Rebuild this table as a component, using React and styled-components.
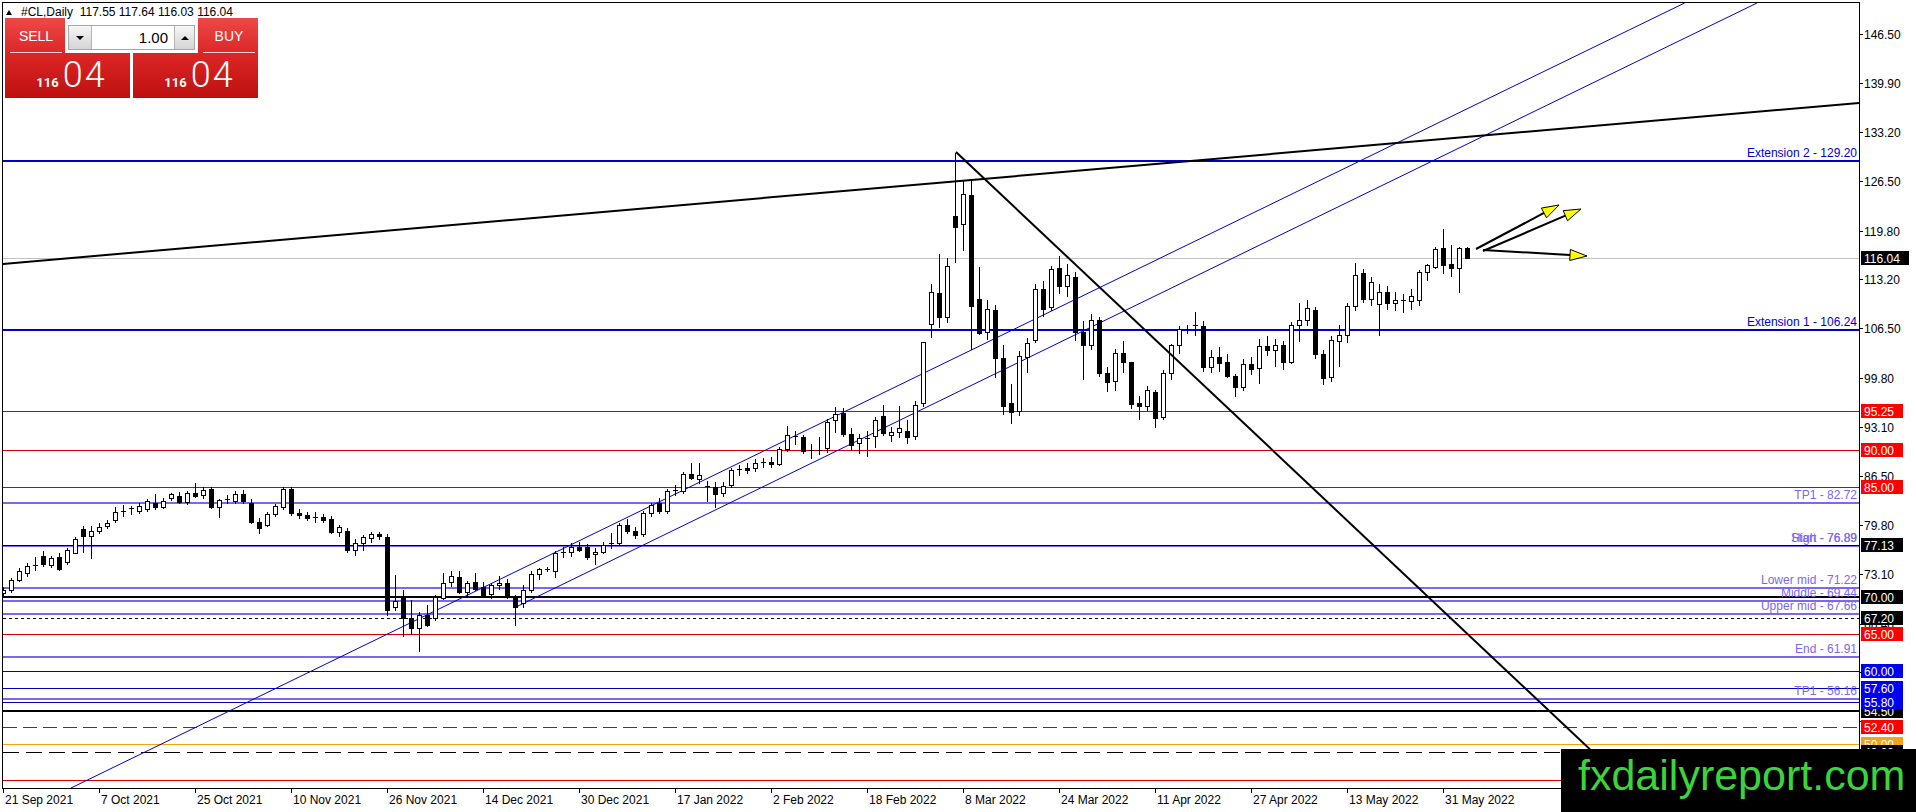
import React from 'react';
import styled, { createGlobalStyle } from 'styled-components';

const GlobalStyle = createGlobalStyle`
  html, body {
    margin: 0;
    padding: 0;
    background: #fff;
  }
  body {
    font-family: "Liberation Sans", Arial, sans-serif;
    overflow: hidden;
  }
`;

const BLUE = '#0000cd';
const NAVY = '#0000b4';
const PURPLE = '#7b68ee';
const RED_LINE = '#d40000';
const RED_TAG = '#ff0000';
const ORANGE = '#f4a21c';

const PLOT_R = 1859;
const PLOT_B = 788;

// chart scale: 146.50 sits at y=34, 7.36px per dollar
const priceY = (p) => 34 + (146.5 - p) * 7.36;
const barX = (i) => 3 + 8 * i;

// daily bars, 21 Sep 2021 .. 3 Jun 2022  [open, high, low, close]
const bars = [
  [70.6, 71.4, 70.2, 71.0], [70.9, 72.6, 70.5, 72.3], [72.3, 73.9, 72.0, 73.6], [73.2, 74.6, 72.7, 74.2],
  [74.3, 75.4, 73.6, 74.4], [75.6, 76.2, 74.1, 74.5], [74.4, 75.6, 73.9, 75.3], [75.5, 76.0, 73.5, 73.8],
  [74.8, 76.6, 74.4, 76.4], [76.0, 78.2, 75.8, 77.9], [79.2, 79.6, 76.0, 78.3], [78.3, 79.6, 75.2, 79.0],
  [79.0, 80.0, 78.5, 79.5], [79.6, 80.4, 79.2, 80.1], [80.4, 82.2, 80.0, 81.5], [81.6, 82.5, 80.9, 81.7],
  [81.9, 82.4, 81.2, 82.05], [81.7, 82.8, 81.3, 82.4], [81.9, 83.3, 81.6, 83.0], [82.8, 84.0, 81.8, 82.2],
  [82.2, 83.5, 81.9, 83.1], [83.4, 84.2, 83.0, 84.0], [83.7, 84.3, 82.6, 82.9], [82.9, 84.4, 82.5, 84.1],
  [84.1, 85.5, 83.5, 83.7], [83.8, 84.9, 83.3, 84.5], [84.7, 85.0, 81.9, 82.2], [82.2, 83.3, 80.7, 83.2],
  [83.3, 83.8, 82.6, 83.35], [83.0, 84.4, 82.6, 84.0], [84.0, 84.6, 82.7, 83.0], [82.8, 83.3, 79.9, 80.2],
  [80.2, 80.8, 78.6, 79.4], [79.8, 81.6, 79.5, 81.3], [81.3, 82.6, 80.9, 82.4], [82.2, 85.0, 81.8, 84.7],
  [84.7, 85.0, 81.0, 81.4], [81.4, 81.9, 80.6, 81.1], [81.1, 81.6, 80.3, 80.7], [80.9, 81.6, 80.1, 80.85],
  [80.9, 81.3, 80.1, 80.4], [80.6, 81.0, 78.5, 78.9], [78.9, 79.8, 78.2, 79.5], [79.0, 79.4, 76.0, 76.4],
  [76.4, 77.9, 75.6, 77.4], [77.3, 78.4, 76.3, 78.2], [78.0, 78.9, 77.4, 78.6], [78.5, 78.9, 77.8, 78.3],
  [78.2, 78.6, 67.4, 68.3], [68.6, 73.0, 68.1, 69.4], [70.0, 71.0, 64.6, 67.1], [67.1, 69.6, 64.9, 65.8],
  [65.8, 68.0, 62.5, 67.5], [67.5, 68.9, 65.9, 66.2], [67.1, 70.3, 66.8, 70.0], [69.9, 73.2, 69.6, 71.9],
  [72.0, 73.5, 71.4, 72.9], [72.7, 73.6, 70.4, 70.7], [70.7, 72.2, 70.2, 71.9], [72.0, 73.3, 70.8, 71.1],
  [71.3, 72.0, 69.9, 70.3], [70.4, 71.9, 69.7, 71.6], [71.6, 72.9, 71.0, 71.9], [71.9, 72.4, 69.7, 70.0],
  [69.9, 70.3, 66.1, 68.6], [69.2, 71.7, 68.5, 71.0], [71.0, 73.5, 70.6, 73.1], [73.1, 74.0, 72.3, 73.8],
  [73.8, 74.1, 73.4, 73.85], [73.6, 76.2, 72.6, 76.0], [76.0, 76.8, 75.3, 76.1], [76.1, 77.4, 75.4, 76.8],
  [76.8, 77.5, 76.1, 76.4], [76.8, 77.2, 75.0, 75.4], [75.8, 76.6, 74.4, 76.1], [76.1, 77.5, 75.8, 77.1],
  [77.3, 78.7, 76.5, 77.4], [77.4, 80.0, 76.9, 79.8], [79.8, 80.6, 78.6, 79.0], [79.0, 79.5, 77.9, 78.4],
  [78.5, 81.7, 78.1, 81.4], [81.4, 82.8, 80.9, 82.5], [82.8, 83.4, 81.3, 81.7], [81.7, 84.7, 81.3, 84.4],
  [84.4, 85.2, 83.7, 84.5], [84.4, 87.0, 84.0, 86.7], [86.7, 88.2, 85.9, 86.2], [86.0, 88.2, 85.4, 86.6],
  [85.0, 85.7, 82.9, 85.1], [85.0, 85.6, 82.1, 84.0], [84.1, 85.6, 83.6, 85.1], [85.2, 87.6, 84.8, 87.2],
  [87.3, 88.0, 86.5, 87.4], [87.5, 88.2, 86.7, 87.3], [87.5, 88.8, 87.0, 88.2], [88.2, 88.9, 87.6, 88.3],
  [88.4, 89.0, 87.5, 88.1], [88.1, 90.4, 87.8, 90.1], [90.1, 93.2, 89.7, 92.0], [91.9, 92.6, 90.6, 91.8],
  [91.7, 92.0, 89.4, 89.8], [89.9, 90.8, 88.7, 90.0], [89.8, 91.7, 89.3, 89.95], [90.2, 94.2, 89.6, 93.8],
  [94.0, 95.8, 92.3, 94.9], [95.0, 95.7, 91.8, 92.1], [92.2, 93.0, 89.9, 90.6], [90.9, 92.2, 89.5, 91.6],
  [91.6, 92.5, 89.0, 91.65], [91.9, 94.4, 90.3, 94.0], [94.6, 96.1, 91.9, 92.3], [92.0, 93.1, 91.0, 92.4],
  [92.4, 96.0, 91.6, 92.9], [92.6, 94.0, 90.8, 91.7], [91.9, 96.6, 91.4, 96.1], [96.4, 104.7, 95.8, 104.6],
  [107.1, 112.5, 105.2, 111.4], [111.3, 116.6, 106.6, 108.0], [108.0, 116.1, 107.2, 115.0], [121.8, 130.3, 115.4, 120.3],
  [120.7, 126.7, 117.0, 124.8], [124.6, 126.7, 103.5, 109.5], [110.5, 114.8, 105.6, 105.9], [106.0, 110.4, 104.9, 109.1],
  [109.0, 109.7, 99.8, 102.5], [102.5, 104.3, 94.8, 96.0], [96.4, 99.0, 93.5, 95.2], [95.3, 103.4, 94.6, 102.7],
  [102.6, 105.2, 100.4, 104.5], [104.9, 112.6, 104.5, 111.8], [111.9, 112.9, 108.0, 109.2], [109.4, 115.0, 108.8, 114.6],
  [114.7, 116.3, 111.2, 112.2], [112.3, 115.2, 110.8, 113.8], [113.5, 114.2, 104.8, 106.0], [106.0, 107.5, 99.5, 104.2],
  [104.3, 108.5, 103.5, 107.7], [107.7, 108.0, 99.9, 100.4], [100.5, 101.3, 97.9, 99.2], [99.3, 103.7, 98.0, 103.2],
  [103.2, 104.8, 100.5, 101.9], [101.9, 102.0, 95.6, 96.2], [96.3, 97.3, 94.0, 96.0], [96.0, 98.7, 95.3, 98.1],
  [97.9, 98.1, 93.0, 94.3], [94.4, 100.9, 94.0, 100.5], [100.5, 104.4, 99.5, 104.2], [104.2, 106.8, 103.0, 106.4],
  [106.4, 106.9, 105.8, 106.3], [107.0, 108.7, 105.4, 106.8], [106.8, 107.5, 100.6, 101.3], [101.3, 103.6, 100.5, 102.6],
  [102.6, 104.0, 100.6, 101.8], [101.9, 103.0, 99.7, 100.0], [100.0, 100.3, 97.2, 98.6], [98.6, 102.4, 98.0, 101.6],
  [101.6, 102.6, 100.2, 101.0], [101.1, 105.0, 99.0, 104.1], [104.1, 105.4, 102.8, 103.6], [103.5, 105.0, 101.3, 104.3],
  [104.3, 104.8, 100.9, 101.9], [102.0, 107.4, 101.6, 106.9], [106.9, 110.0, 104.7, 107.7], [107.7, 110.4, 106.8, 109.3],
  [109.0, 109.4, 102.4, 103.0], [103.0, 103.6, 98.8, 99.8], [99.9, 105.5, 99.2, 104.9], [104.8, 107.0, 101.3, 105.6],
  [105.6, 110.0, 104.5, 109.6], [109.6, 115.4, 108.8, 113.8], [114.0, 114.6, 110.0, 110.5], [110.5, 113.5, 109.5, 112.8],
  [109.8, 112.5, 105.5, 111.4], [111.4, 112.3, 109.0, 110.0], [110.0, 111.5, 108.8, 110.3], [110.3, 111.2, 108.6, 110.4],
  [110.2, 111.8, 109.0, 110.9], [110.4, 114.5, 109.6, 114.2], [114.2, 115.3, 112.9, 115.1], [114.8, 117.5, 114.6, 117.3],
  [117.4, 120.0, 113.9, 115.1], [115.3, 117.8, 113.5, 114.7], [114.7, 117.6, 111.3, 117.4], [117.4, 117.6, 115.9, 116.04],
];

const levels = [
  { p: 129.2, color: BLUE, w: 2 },
  { p: 106.24, color: BLUE, w: 2 },
  { p: 95.25, color: RED_LINE, w: 1 },
  { p: 90, color: RED_LINE, w: 1 },
  { p: 85, color: RED_LINE, w: 1 },
  { p: 82.72, color: PURPLE, w: 2 },
  { p: 76.89, color: PURPLE, w: 2 },
  { p: 77.13, color: '#000', w: 1 },
  { p: 71.22, color: PURPLE, w: 2 },
  { p: 69.44, color: PURPLE, w: 2 },
  { p: 70, color: '#000', w: 2 },
  { p: 67.66, color: PURPLE, w: 2 },
  { p: 67.2, color: '#000', w: 1, dash: '3 3' },
  { p: 65, color: RED_LINE, w: 1 },
  { p: 61.91, color: PURPLE, w: 2 },
  { p: 60, color: NAVY, w: 1 },
  { p: 57.6, color: NAVY, w: 1 },
  { p: 56.16, color: PURPLE, w: 2 },
  { p: 55.8, color: NAVY, w: 1 },
  { p: 54.5, color: '#000', w: 2 },
  { p: 52.4, color: RED_LINE, w: 1, dash: '14 6' },
  { p: 50, color: ORANGE, w: 1 },
  { p: 49, color: '#000', w: 1, dash: '16 7' },
  { p: 45.2, color: RED_LINE, w: 1 },
];

const levelNames = [
  { p: 129.2, text: 'Extension 2 - 129.20', color: BLUE },
  { p: 106.24, text: 'Extension 1 - 106.24', color: BLUE },
  { p: 82.72, text: 'TP1 - 82.72', color: PURPLE },
  { p: 76.89, text: 'Start - 76.89', color: PURPLE },
  { p: 76.89, text: 'High - 76.89', color: PURPLE },
  { p: 71.22, text: 'Lower mid - 71.22', color: PURPLE },
  { p: 69.44, text: 'Middle - 69.44', color: PURPLE },
  { p: 67.66, text: 'Upper mid - 67.66', color: PURPLE },
  { p: 61.91, text: 'End - 61.91', color: PURPLE },
  { p: 56.16, text: 'TP1 - 56.16', color: PURPLE },
];

// grid prices; the lowest ones sit under the level tags and the logo, so they only get a tick mark
const priceTicks = [146.5, 139.9, 133.2, 126.5, 119.8, 113.2, 106.5, 99.8, 93.1, 86.5, 79.8, 73.1, 66.4];
const hiddenTicks = [59.8, 53.1, 46.4];

const tags = [
  { p: 116.04, bg: '#000', wide: true },
  { p: 95.25, bg: RED_TAG },
  { p: 90, bg: RED_TAG },
  { p: 85, bg: RED_TAG },
  { p: 77.13, bg: '#000' },
  { p: 70, bg: '#000' },
  { p: 67.2, bg: '#000' },
  { p: 65, bg: RED_TAG },
  { p: 60, bg: '#0000f0' },
  { p: 57.6, bg: '#0000f0' },
  { p: 54.5, bg: '#000' },
  { p: 55.8, bg: '#0000f0' },
  { p: 52.4, bg: RED_TAG },
  { p: 50, bg: ORANGE },
  { p: 49, bg: '#000' },
];

const dates = [
  '21 Sep 2021', '7 Oct 2021', '25 Oct 2021', '10 Nov 2021', '26 Nov 2021', '14 Dec 2021',
  '30 Dec 2021', '17 Jan 2022', '2 Feb 2022', '18 Feb 2022', '8 Mar 2022', '24 Mar 2022',
  '11 Apr 2022', '27 Apr 2022', '13 May 2022', '31 May 2022',
];

const arrows = [
  { from: [1476, 249], to: [1559, 205] },
  { from: [1483, 251], to: [1581, 209] },
  { from: [1483, 250], to: [1587, 256] },
];

const Window = styled.div`
  position: relative;
  width: 1916px;
  height: 812px;
  overflow: hidden;
  background: #fff;
`;

const ChartSvg = styled.svg`
  display: block;
`;

const ChartText = styled.text`
  font-family: "Liberation Sans", Arial, sans-serif;
  font-size: 12px;
  fill: ${(p) => p.$color || '#000'};
`;

const Header = styled.div`
  position: absolute;
  top: 5px;
  left: 6px;
  display: flex;
  align-items: center;
  gap: 9px;
  font-size: 12px;
  line-height: 14px;
  color: #000;
  white-space: pre;
`;

const UpMark = styled.span`
  width: 0;
  height: 0;
  border-left: 3.5px solid transparent;
  border-right: 3.5px solid transparent;
  border-bottom: 5px solid #000;
`;

const TradePanel = styled.div`
  position: absolute;
  top: 18px;
  left: 5px;
  width: 253px;
  display: grid;
  grid-template-rows: 35px 45px;
`;

const TopRow = styled.div`
  display: grid;
  grid-template-columns: 60px 1fr 60px;
  column-gap: 3px;
`;

const SideCell = styled.div`
  display: flex;
  padding: 0 3px 0 5px;
  background: linear-gradient(#ef4747, #da2828);
`;

const SideLabel = styled.div`
  flex: 1;
  display: flex;
  align-items: center;
  justify-content: center;
  padding-top: 2px;
  border-bottom: 1px solid rgba(255, 255, 255, 0.8);
  color: #fff;
  font-size: 14px;
`;

const Spinner = styled.div`
  align-self: end;
  margin-bottom: 3px;
  height: 25px;
  box-sizing: border-box;
  display: grid;
  grid-template-columns: 23px 1fr 20px;
  border: 1px solid #a8a8a8;
  background: #fff;
`;

const SpinButton = styled.div`
  display: flex;
  align-items: center;
  justify-content: center;
  background: linear-gradient(#f6f6f6, #d4d4d4);
  ${(p) => (p.$side === 'left' ? 'border-right: 1px solid #b4b4b4;' : 'border-left: 1px solid #b4b4b4;')}
`;

const SpinArrow = styled.span`
  width: 0;
  height: 0;
  border-left: 4px solid transparent;
  border-right: 4px solid transparent;
  ${(p) => (p.$up ? 'border-bottom: 4px solid #000;' : 'border-top: 4px solid #000;')}
`;

const Lot = styled.div`
  display: flex;
  align-items: center;
  justify-content: flex-end;
  padding-right: 6px;
  font-size: 15px;
  color: #000;
`;

const BottomRow = styled.div`
  display: grid;
  grid-template-columns: 1fr 1fr;
  column-gap: 3px;
`;

const PriceBlock = styled.div`
  display: flex;
  align-items: baseline;
  justify-content: center;
  padding: 2px 0 0 8px;
  background: linear-gradient(#dc2626, #bd1010);
  color: #fff;
`;

const PriceHead = styled.span`
  font-family: Roboto, "Liberation Sans", sans-serif;
  font-weight: 700;
  font-size: 13px;
  margin-right: 4px;
`;

const PricePips = styled.span`
  font-family: Roboto, "Liberation Sans", sans-serif;
  font-weight: 300;
  font-size: 36px;
  line-height: 40px;
  letter-spacing: 2px;
`;

const Watermark = styled.div`
  position: absolute;
  right: 0;
  bottom: 0;
  width: 355px;
  height: 63px;
  box-sizing: border-box;
  padding: 0 0 10px 17px;
  background: #000;
  color: #3cd43c;
  font-family: "Liberation Sans", Arial, sans-serif;
  font-size: 43px;
  line-height: 53px;
  white-space: nowrap;
`;

function Candle({ index, bar }) {
  const [o, h, l, c] = bar;
  const x = barX(index);
  const top = Math.round(priceY(Math.max(o, c)));
  const bottom = Math.round(priceY(Math.min(o, c)));
  return (
    <g>
      <line x1={x + 0.5} x2={x + 0.5} y1={Math.round(priceY(h))} y2={Math.round(priceY(l))} stroke="#000" />
      {bottom - top < 2 ? (
        <line x1={x - 2} x2={x + 3} y1={top + 0.5} y2={top + 0.5} stroke="#000" />
      ) : (
        <rect x={x - 1.5} y={top + 0.5} width={4} height={bottom - top}
          fill={c >= o ? '#fff' : '#000'} stroke="#000" />
      )}
    </g>
  );
}

function Level({ p, color, w, dash }) {
  const y = w === 1 ? Math.round(priceY(p)) + 0.5 : Math.round(priceY(p));
  return <line x1={3} x2={PLOT_R} y1={y} y2={y} stroke={color} strokeWidth={w} strokeDasharray={dash} />;
}

function Arrow({ from, to }) {
  const [x1, y1] = from;
  const [x2, y2] = to;
  const len = Math.hypot(x2 - x1, y2 - y1);
  const ux = (x2 - x1) / len;
  const uy = (y2 - y1) / len;
  const bx = x2 - ux * 17;
  const by = y2 - uy * 17;
  const pts = `${x2},${y2} ${bx - uy * 5.5},${by + ux * 5.5} ${bx + uy * 5.5},${by - ux * 5.5}`;
  return (
    <g>
      <line x1={x1} y1={y1} x2={bx} y2={by} stroke="#000" strokeWidth="2" />
      <polygon points={pts} fill="#ffff00" stroke="#000" strokeWidth="1" />
    </g>
  );
}

function AxisTag({ p, bg, wide }) {
  const y = Math.round(priceY(p));
  return (
    <g>
      <rect x={1861} y={y - 7} width={wide ? 48 : 42} height={14} fill={bg} />
      <ChartText x={1864} y={y + 5} $color="#fff">{p.toFixed(2)}</ChartText>
    </g>
  );
}

function TickMark({ p }) {
  const y = Math.round(priceY(p)) + 0.5;
  return <line x1={PLOT_R} x2={PLOT_R + 4} y1={y} y2={y} stroke="#000" />;
}

function Chart() {
  return (
    <ChartSvg width="1916" height="812" viewBox="0 0 1916 812">
      <defs>
        <clipPath id="plot-area">
          <rect x="3" y="3" width={PLOT_R - 3} height={PLOT_B - 3} />
        </clipPath>
      </defs>
      <g clipPath="url(#plot-area)">
        <g shapeRendering="crispEdges">
          <line x1={3} x2={PLOT_R} y1={258.5} y2={258.5} stroke="#c0c0c0" />
          {levels.map((lv) => <Level key={`${lv.p}-${lv.color}`} {...lv} />)}
        </g>
        <line x1={71} y1={788} x2={1684.6} y2={3} stroke="#0000c8" strokeWidth="1" />
        <line x1={516} y1={607} x2={1757} y2={3} stroke="#0000c8" strokeWidth="1" />
        <g shapeRendering="crispEdges">
          {bars.map((bar, i) => <Candle key={i} index={i} bar={bar} />)}
        </g>
        <line x1={2} y1={264} x2={PLOT_R} y2={103} stroke="#000" strokeWidth="2" />
        <line x1={956} y1={152} x2={1631} y2={788} stroke="#000" strokeWidth="2" />
        {arrows.map((a, i) => <Arrow key={i} {...a} />)}
        {levelNames.map((n) => (
          <ChartText key={n.text} x={1857} y={Math.round(priceY(n.p)) - 4} textAnchor="end" $color={n.color}>
            {n.text}
          </ChartText>
        ))}
      </g>

      <rect x="2.5" y="2.5" width={PLOT_R - 2} height={PLOT_B - 2} fill="none" stroke="#000" shapeRendering="crispEdges" />

      <g shapeRendering="crispEdges">
        {priceTicks.map((p) => (
          <g key={p}>
            <TickMark p={p} />
            <ChartText x={1864} y={Math.round(priceY(p)) + 5}>{p.toFixed(2)}</ChartText>
          </g>
        ))}
        {hiddenTicks.map((p) => <TickMark key={p} p={p} />)}
        {tags.map((t) => <AxisTag key={t.p} {...t} />)}
        {dates.map((d, k) => {
          const x = barX(k * 12);
          return (
            <g key={d}>
              <line x1={x + 0.5} x2={x + 0.5} y1={PLOT_B} y2={PLOT_B + 5} stroke="#000" />
              <ChartText x={x + 2} y={804}>{d}</ChartText>
            </g>
          );
        })}
      </g>
    </ChartSvg>
  );
}

function Trading() {
  return (
    <TradePanel>
      <TopRow>
        <SideCell><SideLabel>SELL</SideLabel></SideCell>
        <Spinner>
          <SpinButton $side="left"><SpinArrow /></SpinButton>
          <Lot>1.00</Lot>
          <SpinButton $side="right"><SpinArrow $up /></SpinButton>
        </Spinner>
        <SideCell><SideLabel>BUY</SideLabel></SideCell>
      </TopRow>
      <BottomRow>
        <PriceBlock><PriceHead>116</PriceHead><PricePips>04</PricePips></PriceBlock>
        <PriceBlock><PriceHead>116</PriceHead><PricePips>04</PricePips></PriceBlock>
      </BottomRow>
    </TradePanel>
  );
}

export default function App() {
  return (
    <Window>
      <GlobalStyle />
      <Chart />
      <Header>
        <UpMark />
        <span>#CL,Daily  117.55 117.64 116.03 116.04</span>
      </Header>
      <Trading />
      <Watermark>fxdailyreport.com</Watermark>
    </Window>
  );
}
